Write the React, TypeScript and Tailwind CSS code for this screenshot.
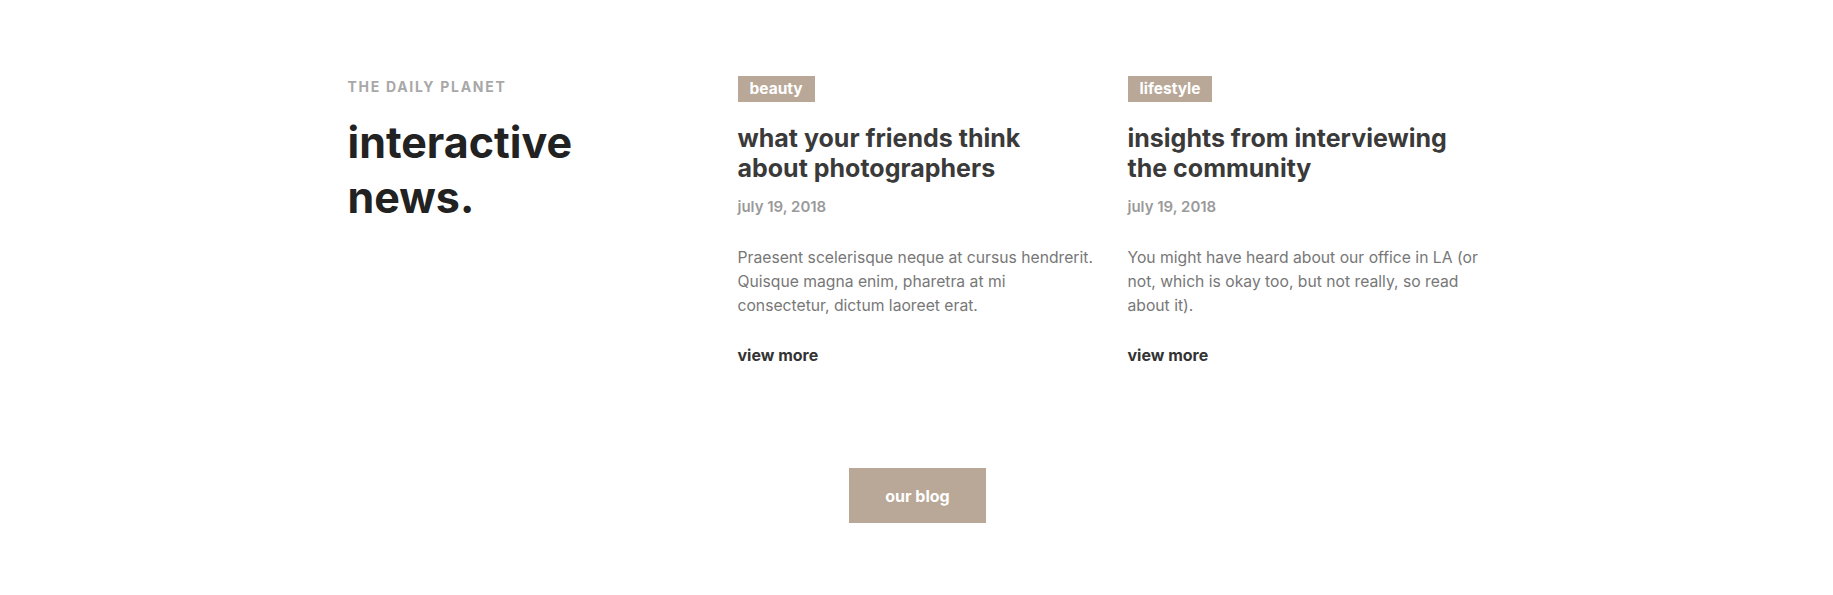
import React from "react";

interface Post {
  id: number;
  tag: string;
  title: string;
  date: string;
  excerpt: string;
}

const posts: Post[] = [
  {
    id: 1,
    tag: "beauty",
    title: "what your friends think about photographers",
    date: "july 19, 2018",
    excerpt:
      "Praesent scelerisque neque at cursus hendrerit. Quisque magna enim, pharetra at mi consectetur, dictum laoreet erat.",
  },
  {
    id: 2,
    tag: "lifestyle",
    title: "insights from interviewing the community",
    date: "july 19, 2018",
    excerpt:
      "You might have heard about our office in LA (or not, which is okay too, but not really, so read about it).",
  },
];

const App: React.FC = () => {
  return (
    <div className="min-h-[595px] w-full bg-white font-['Inter','Liberation_Sans',sans-serif]">
      <div className="mx-auto w-[1142px] pl-[2px] pt-[76px]">
        <div className="grid grid-cols-3 gap-[30px]">
          {/* Intro */}
          <div className="pt-px">
            <p className="text-[14px] leading-[20px] font-bold uppercase tracking-[1.7px] text-[#a8a8a8]">
              The Daily Planet
            </p>
            <h2 className="mt-[18px] text-[43px] leading-[55px] font-bold text-[#222222]">
              interactive
              <br />
              news.
            </h2>
          </div>

          {posts.map((post) => (
            <div key={post.id} className="flex flex-col items-start">
              <span className="h-[26px] px-[12px] bg-[#b9a898] text-white text-[15.5px] leading-[26px] font-bold">
                {post.tag}
              </span>
              <h3 className="mt-[21px] text-[25px] leading-[30px] font-bold text-[#3a3a3a] pr-[40px]">
                {post.title}
              </h3>
              <p className="mt-[12px] text-[15px] leading-[24px] font-semibold text-[#9a9a9a]">
                {post.date}
              </p>
              <p className="mt-[27px] text-[15.7px] leading-[24px] text-[#777777]">
                {post.excerpt}
              </p>
              <a
                href="#"
                className="mt-[25px] text-[16px] leading-[24px] font-bold text-[#333333] no-underline"
              >
                view more
              </a>
            </div>
          ))}
        </div>

        <div className="mt-[101px] flex justify-center">
          <a
            href="#"
            className="flex h-[55px] w-[137px] items-center justify-center bg-[#b9a898] text-[16px] font-bold text-white no-underline"
          >
            our blog
          </a>
        </div>
      </div>
    </div>
  );
};

export default App;
